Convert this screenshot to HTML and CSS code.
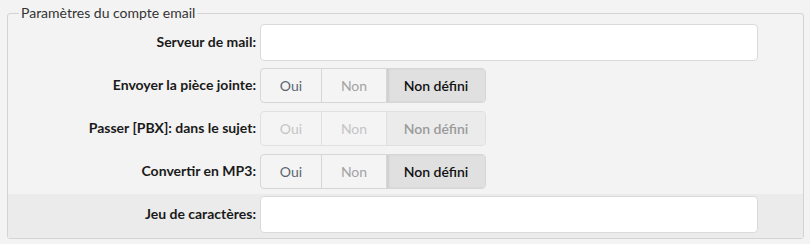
FILE: index.html
```html
<!DOCTYPE html>
<html lang="fr">
<head>
<meta charset="utf-8">
<title>Paramètres du compte email</title>
<link rel="stylesheet" href="styles.css">
</head>
<body>
<fieldset class="panel">
  <legend class="panel-title">Paramètres du compte email</legend>
  <div class="row">
    <label class="row-label">Serveur de mail:</label>
    <div class="row-control"><input class="text-input" type="text"></div>
  </div>
  <div class="row">
    <label class="row-label">Envoyer la pièce jointe:</label>
    <div class="row-control">
      <div class="btn-group">
        <span class="btn btn-yes">Oui</span>
        <span class="btn btn-no">Non</span>
        <span class="btn btn-undef active">Non défini</span>
      </div>
    </div>
  </div>
  <div class="row">
    <label class="row-label">Passer [PBX]: dans le sujet:</label>
    <div class="row-control">
      <div class="btn-group disabled">
        <span class="btn btn-yes">Oui</span>
        <span class="btn btn-no">Non</span>
        <span class="btn btn-undef active">Non défini</span>
      </div>
    </div>
  </div>
  <div class="row">
    <label class="row-label">Convertir en MP3:</label>
    <div class="row-control">
      <div class="btn-group">
        <span class="btn btn-yes">Oui</span>
        <span class="btn btn-no">Non</span>
        <span class="btn btn-undef active">Non défini</span>
      </div>
    </div>
  </div>
  <div class="row row-hover">
    <label class="row-label">Jeu de caractères:</label>
    <div class="row-control"><input class="text-input" type="text"></div>
  </div>
</fieldset>
</body>
</html>
```
FILE: styles.css
```css
html, body {
  margin: 0;
  background: #f3f3f3;
}
body {
  padding: 5px 6px 0 7px;
  font-family: Lato, "Open Sans", "Liberation Sans", sans-serif;
  font-size: 14px;
  color: #222;
}
.panel {
  margin: 0;
  padding: 1px 0 0 0;
  border: 1px solid #d3d3d3;
  border-radius: 3px;
  min-width: 0;
}
.panel-title {
  margin-left: 11px;
  padding: 0 2px;
  line-height: 16px;
  color: #333;
}
.row {
  display: grid;
  grid-template-columns: 248px 498px;
  column-gap: 4px;
  height: 43px;
  padding-top: 2px;
  box-sizing: border-box;
  align-items: start;
}
.row-hover {
  background: #ebebeb;
  height: 44px;
}
.row-label {
  text-align: right;
  font-weight: 700;
  color: #1a1a1a;
  line-height: 36px;
  white-space: nowrap;
}
.row-control {
  display: flex;
  align-items: center;
  height: 36px;
}
.text-input {
  box-sizing: border-box;
  width: 498px;
  height: 37px;
  margin: 0;
  border: 1px solid #dadada;
  border-radius: 4px;
  background: #fff;
  font: inherit;
  padding: 0 8px;
}
.btn-group {
  display: flex;
  height: 35px;
  box-sizing: border-box;
  border: 1px solid #d6d6d6;
  border-radius: 4px;
  overflow: hidden;
  background: #f4f4f4;
}
.btn {
  display: flex;
  align-items: center;
  justify-content: center;
  box-sizing: border-box;
  height: 100%;
}
.btn + .btn { border-left: 1px solid #d6d6d6; }
.btn-yes { width: 60px; color: #5a6670; }
.btn-no { width: 65px; color: #a3a3a3; }
.btn-undef { width: 99px; }
.btn.active {
  background: #e0e0e0;
  color: #111;
  font-weight: 600;
  box-shadow: inset 2px 0 2px rgba(0,0,0,0.08);
}
.btn-group.disabled {
  border-color: #e0e0e0;
}
.btn-group.disabled .btn + .btn { border-left-color: #e0e0e0; }
.btn-group.disabled .btn-yes,
.btn-group.disabled .btn-no { color: #c4c4c4; }
.btn-group.disabled .btn.active {
  background: #ebebeb;
  color: #9a9a9a;
  box-shadow: none;
}
```
